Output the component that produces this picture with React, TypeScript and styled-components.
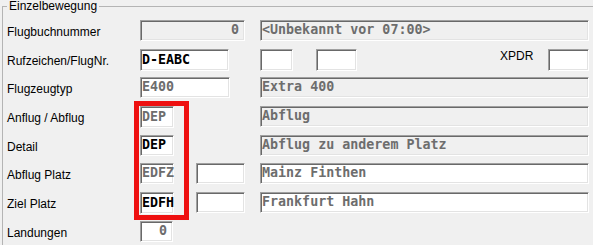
import React from 'react'
import styled, { createGlobalStyle } from 'styled-components'

const GlobalStyle = createGlobalStyle`
  html, body {
    margin: 0;
    padding: 0;
    background: #f0f0f0;
    overflow: hidden;
  }
  body {
    font-family: "Liberation Sans", Arial, sans-serif;
    font-size: 12px;
    color: #000;
  }
`

const Screen = styled.div`
  position: relative;
  width: 593px;
  height: 245px;
  overflow: hidden;
`

const Group = styled.fieldset`
  margin: 0 0 0 2px;
  padding: 7px 0 0 4px;
  width: 640px;
  border: 1px solid #b4b4b4;
  border-radius: 0;
  min-height: 260px;
  box-sizing: border-box;
`

const GroupTitle = styled.legend`
  margin-left: 0;
  padding: 0 2px;
  line-height: 13px;
  font-size: 12px;
`

const Row = styled.div`
  display: flex;
  align-items: flex-start;
  height: 28.667px;
`

const Label = styled.div`
  width: 133px;
  flex: none;
  line-height: 21px;
  padding-top: 2px;
  white-space: nowrap;
`

const SideLabel = styled.div<{ $w: number; $at: number }>`
  flex: none;
  width: ${p => p.$w}px;
  margin-left: ${p => p.$at}px;
  line-height: 15px;
  white-space: nowrap;
`

const Field = styled.div<{
  $w: number
  $at?: number
  $h?: number
  $gray?: boolean
  $strong?: boolean
  $right?: boolean
}>`
  box-sizing: border-box;
  flex: none;
  width: ${p => p.$w}px;
  height: ${p => p.$h ?? 21}px;
  margin-left: ${p => p.$at ?? 0}px;
  background: ${p => (p.$gray ? '#f0f0f0' : '#ffffff')};
  border-style: solid;
  border-width: 1px;
  border-color: #a0a0a0 #ffffff #ffffff #a0a0a0;
  box-shadow: inset 1px 1px 0 #696969, inset -1px -1px 0 #e3e3e3;
  padding: 0 ${p => (p.$right ? 5 : 0)}px 0 ${p => (p.$right ? 0 : 1)}px;
  font-family: "DejaVu Sans Mono", "Liberation Mono", monospace;
  font-size: 13.33px;
  font-weight: bold;
  line-height: ${p => (p.$h ?? 21) - 3}px;
  color: ${p => (p.$strong ? '#000000' : '#6d6d6d')};
  text-align: ${p => (p.$right ? 'right' : 'left')};
  white-space: pre;
  overflow: visible;
`

const Highlight = styled.div`
  position: absolute;
  left: 134px;
  top: 101px;
  width: 55px;
  height: 119px;
  box-sizing: border-box;
  border: 5px solid #ee1010;
  pointer-events: none;
`

const App = () => {
  return (
    <Screen>
      <GlobalStyle />
      <Group>
        <GroupTitle>Einzelbewegung</GroupTitle>
        <Row>
          <Label>Flugbuchnummer</Label>
          <Field $w={105} $gray $right>0</Field>
          <Field $w={329} $at={15} $gray>{'<Unbekannt vor 07:00>'}</Field>
        </Row>
        <Row>
          <Label>Rufzeichen/FlugNr.</Label>
          <Field $w={89} $h={22} $strong>D-EABC</Field>
          <Field $w={33} $h={22} $at={31} />
          <Field $w={41} $h={22} $at={23} />
          <SideLabel $w={48} $at={143}>XPDR</SideLabel>
          <Field $w={41} $h={22} />
        </Row>
        <Row>
          <Label>Flugzeugtyp</Label>
          <Field $w={90}>E400</Field>
          <Field $w={329} $at={30} $gray>Extra 400</Field>
        </Row>
        <Row>
          <Label>Anflug / Abflug</Label>
          <Field $w={34} $h={22}>DEP</Field>
          <Field $w={329} $at={86} $gray>Abflug</Field>
        </Row>
        <Row>
          <Label>Detail</Label>
          <Field $w={34} $strong>DEP</Field>
          <Field $w={329} $at={86} $gray>Abflug zu anderem Platz</Field>
        </Row>
        <Row>
          <Label>Abflug Platz</Label>
          <Field $w={34}>EDFZ</Field>
          <Field $w={49} $at={22} />
          <Field $w={329} $at={15}>Mainz Finthen</Field>
        </Row>
        <Row>
          <Label>Ziel Platz</Label>
          <Field $w={34} $h={22} $strong>EDFH</Field>
          <Field $w={49} $at={22} />
          <Field $w={329} $at={15}>Frankfurt Hahn</Field>
        </Row>
        <Row>
          <Label>Landungen</Label>
          <Field $w={33} $right>0</Field>
        </Row>
      </Group>
      <Highlight />
    </Screen>
  )
}

export default App
